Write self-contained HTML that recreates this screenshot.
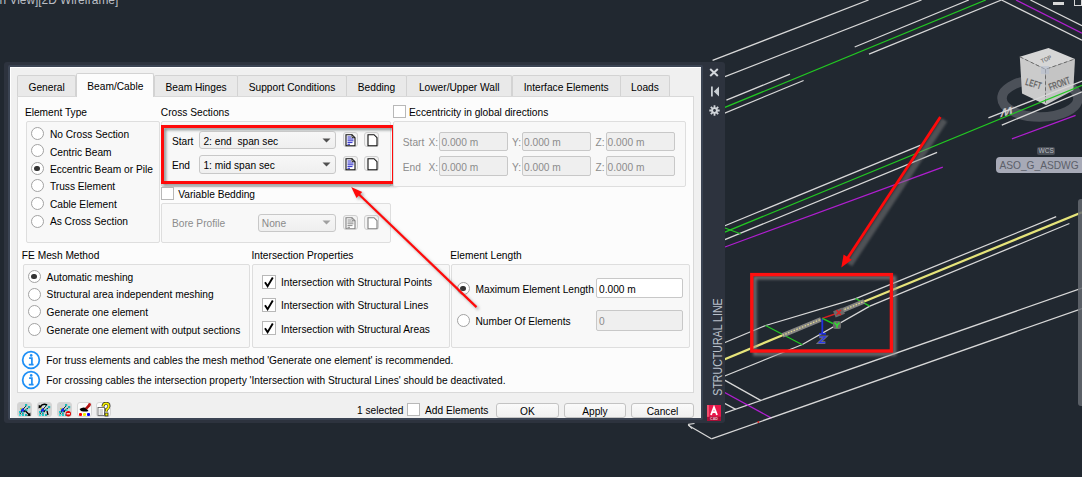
<!DOCTYPE html>
<html><head><meta charset="utf-8"><style>
html,body{margin:0;padding:0;}
body{width:1082px;height:477px;overflow:hidden;background:#212830;position:relative;font-family:"Liberation Sans", sans-serif;}
.t{position:absolute;font-family:"Liberation Sans", sans-serif;font-size:10.2px;line-height:12px;white-space:nowrap;}
.r{position:absolute;}
.cad{position:absolute;left:0;top:0;}
.rad{position:absolute;width:11px;height:11px;border:1px solid #a2a2a2;border-radius:50%;background:#fff;}
.rad .dot{position:absolute;left:2.6px;top:2.6px;width:5.8px;height:5.8px;border-radius:50%;background:#333;}
.chk{position:absolute;border:1px solid #b8b8b8;background:#fff;}
.tab{position:absolute;box-sizing:border-box;border:1px solid #d3d3d3;border-bottom:none;background:#e9e9e9;border-radius:2px 2px 0 0;}
.tab.sel{background:#fcfcfc;}
.combo{position:absolute;border:1px solid #c8c8c8;border-radius:3px;background:linear-gradient(#f7f7f7,#efefef);}
.ibtn{position:absolute;width:13px;height:13px;border:1px solid #cfcfcf;border-radius:3px;background:#f2f2f2;}
.inp{position:absolute;border:1px solid #c8c8c8;border-radius:2px;background:#fff;}
.inp.dis{background:#efefef;}
.btn{position:absolute;border:1px solid #c3c3c3;border-radius:3px;background:linear-gradient(#fafafa,#f0f0f0);}
</style></head><body>
<svg class="cad" width="1082" height="477" viewBox="0 0 1082 477">
<ellipse cx="1040" cy="98.2" rx="38" ry="18.8" fill="none" stroke="#4c5159" stroke-width="9.5"/>
<polygon points="1048.5,47.9 1075,58.9 1045.5,69.3 1019.8,56.8" fill="#d6d6d6"/>
<polygon points="1019.8,56.8 1045.5,69.3 1046,105 1022,93.5" fill="#cbcbcb"/>
<polygon points="1045.5,69.3 1075,58.9 1073.3,90.3 1046,105" fill="#c4c4c4"/>
<path d="M1019.8 56.8 L1045.5 69.3 L1075 58.9 M1045.5 69.3 V105" stroke="#6a6a6a" stroke-width="1" stroke-dasharray="3.5 2.5" fill="none"/>
<rect x="1041" y="66" width="8" height="8" fill="#b8c0d0" opacity="0.6"/>
<text font-family="Liberation Sans" font-size="8" font-weight="bold" fill="#686868" text-anchor="middle" transform="translate(1032.5 87) rotate(17) scale(0.8 1.25)">LEFT</text>
<text font-family="Liberation Sans" font-size="8" font-weight="bold" fill="#686868" text-anchor="middle" transform="translate(1060.5 87) rotate(-20) scale(0.8 1.3)">FRONT</text>
<text font-family="Liberation Sans" font-size="6" font-weight="bold" fill="#7a7a7a" text-anchor="middle" transform="translate(1047 61) rotate(-25) scale(0.9 1)">TOP</text>
<text font-family="Liberation Sans" font-size="11" font-weight="bold" fill="#c4c4c4" text-anchor="middle" transform="translate(1007.5 107.5) rotate(165) skewX(-25) scale(1.2 1)">W</text>
<line x1="712.6" y1="60.4" x2="868.6" y2="0" stroke="#d8d8d8" stroke-width="1.25"/>
<line x1="700" y1="86.3" x2="921.5" y2="0" stroke="#d8d8d8" stroke-width="1.25"/>
<line x1="726.4" y1="100.1" x2="790" y2="74.2" stroke="#d8d8d8" stroke-width="1.25"/>
<line x1="700" y1="117.6" x2="985.8" y2="0" stroke="#22c822" stroke-width="1.25"/>
<line x1="700" y1="123.3" x2="803.6" y2="80.5" stroke="#d8d8d8" stroke-width="1.25"/>
<line x1="854.7" y1="47" x2="968.8" y2="0" stroke="#d8d8d8" stroke-width="1.25"/>
<line x1="869" y1="54.1" x2="1001.5" y2="0" stroke="#d8d8d8" stroke-width="1.25"/>
<line x1="1001.5" y1="0" x2="1082" y2="40.3" stroke="#d8d8d8" stroke-width="1.25"/>
<line x1="1016" y1="0" x2="1082" y2="33.3" stroke="#b01ed0" stroke-width="1.25"/>
<line x1="1030.4" y1="0" x2="1082" y2="25.8" stroke="#d8d8d8" stroke-width="1.25"/>
<line x1="700" y1="236" x2="920.8" y2="145.1" stroke="#d8d8d8" stroke-width="1.25"/>
<line x1="700" y1="242.3" x2="1082" y2="85.3" stroke="#22c822" stroke-width="1.25"/>
<line x1="700" y1="249.8" x2="937.1" y2="152.4" stroke="#d8d8d8" stroke-width="1.25"/>
<line x1="725" y1="247" x2="942.8" y2="167.1" stroke="#b01ed0" stroke-width="1.25"/>
<line x1="725" y1="228" x2="741" y2="234" stroke="#22c822" stroke-width="1.25"/>
<line x1="988.4" y1="117.9" x2="1082" y2="81" stroke="#d8d8d8" stroke-width="1.25"/>
<line x1="1001.8" y1="125.1" x2="1082" y2="91.9" stroke="#d8d8d8" stroke-width="1.25"/>
<line x1="1011.9" y1="138.9" x2="1075.6" y2="115.4" stroke="#b01ed0" stroke-width="1.25"/>
<line x1="700" y1="353" x2="765.6" y2="325.5" stroke="#d8d8d8" stroke-width="1.25"/>
<line x1="765.6" y1="325.5" x2="855.7" y2="298.6" stroke="#d8d8d8" stroke-width="1.25"/>
<line x1="855.7" y1="298.6" x2="1056.2" y2="216.7" stroke="#d8d8d8" stroke-width="1.25"/>
<line x1="700" y1="369.4" x2="782.5" y2="335.3" stroke="#e6e47a" stroke-width="2.2"/>
<line x1="864.2" y1="301.4" x2="1082" y2="212.3" stroke="#e6e47a" stroke-width="2.2"/>
<line x1="700" y1="386" x2="802.4" y2="344.5" stroke="#d8d8d8" stroke-width="1.25"/>
<line x1="802.4" y1="344.5" x2="869.8" y2="306.1" stroke="#d8d8d8" stroke-width="1.25"/>
<line x1="869.8" y1="306.1" x2="1069.4" y2="223.5" stroke="#d8d8d8" stroke-width="1.25"/>
<line x1="765.6" y1="325.5" x2="802.4" y2="344.7" stroke="#22c822" stroke-width="1.25"/>
<line x1="855.7" y1="298.6" x2="869.8" y2="306.1" stroke="#22c822" stroke-width="1.25"/>
<line x1="700" y1="366.4" x2="725" y2="380.4" stroke="#d8d8d8" stroke-width="1.25"/>
<line x1="725" y1="380.4" x2="761.1" y2="400.6" stroke="#d8d8d8" stroke-width="1.25"/>
<line x1="700" y1="421.7" x2="1082" y2="288.1" stroke="#d8d8d8" stroke-width="1.25"/>
<line x1="700" y1="390" x2="735.7" y2="409.4" stroke="#d8d8d8" stroke-width="1.25"/>
<line x1="700" y1="379" x2="771.5" y2="418.1" stroke="#b01ed0" stroke-width="1.25"/>
<line x1="688.2" y1="425.2" x2="711.4" y2="438.8" stroke="#d8d8d8" stroke-width="1.25"/>
<line x1="711.4" y1="438.8" x2="1082" y2="308.5" stroke="#d8d8d8" stroke-width="1.25"/>
<line x1="688.2" y1="424.4" x2="694.5" y2="423.5" stroke="#d8d8d8" stroke-width="1.25"/>
<line x1="688.2" y1="424.4" x2="692" y2="428.6" stroke="#d8d8d8" stroke-width="1.25"/>
<line x1="782.5" y1="335.3" x2="821" y2="319.3" stroke="#858585" stroke-width="4.6"/>
<line x1="839" y1="311.8" x2="864.2" y2="301.4" stroke="#858585" stroke-width="4.6"/>
<line x1="782.5" y1="335.3" x2="821" y2="319.3" stroke="#e0d890" stroke-width="1.3" stroke-dasharray="1.5 1.5"/>
<line x1="839" y1="311.8" x2="864.2" y2="301.4" stroke="#e0d890" stroke-width="1.3" stroke-dasharray="1.5 1.5"/>
<line x1="822.3" y1="318.4" x2="822.3" y2="333.5" stroke="#2030e0" stroke-width="1.8"/>
<line x1="819" y1="333.8" x2="826" y2="333.8" stroke="#2030e0" stroke-width="1.6"/>
<path d="M819.3 336.8 H825.3 L819.3 342.6 H825.3" stroke="#777" stroke-width="2.8" fill="none"/>
<path d="M819.3 336.8 H825.3 L819.3 342.6 H825.3" stroke="#2838e8" stroke-width="1.3" fill="none"/>
<line x1="822.3" y1="318.4" x2="835" y2="314" stroke="#d82020" stroke-width="1.5"/>
<rect x="834" y="309" width="10" height="7" fill="#6a6a6a" transform="rotate(-22 839 312.5)"/>
<path d="M836.5 310 L841 315 M841 310 L836.5 315" stroke="#e02020" stroke-width="1.3"/>
<line x1="822.3" y1="318.4" x2="834" y2="324" stroke="#20c820" stroke-width="1.5"/>
<rect x="833" y="321" width="8" height="8" fill="#6a6a6a" rx="2"/>
<path d="M834.5 322.5 L837 325.5 L839.5 322.5 M837 325.5 V328" stroke="#30e030" stroke-width="1.4" fill="none"/>
<circle cx="758.3" cy="421.9" r="1" fill="#e02020"/>
</svg>
<div class="r" style="left:1037.2px;top:146.8px;width:18px;height:8.5px;background:#4a4f57;border-radius:2px"></div>
<div class="t" style="left:1037.2px;width:18px;text-align:center;top:146.3px;font-size:6.5px;line-height:9px;color:#b8bcc2">WCS</div>
<div class="r" style="left:996px;top:157.4px;width:96px;height:15.8px;background:#a7aab7;border-radius:4px"></div>
<div class="t" style="left:999.4px;top:158.6px;font-size:10.2px;line-height:14px;color:#5c606a">ASO_G_ASDWG</div>
<div class="r" style="left:1077.5px;top:199px;width:6px;height:207px;background:rgba(100,105,112,0.85);border-radius:3px"></div>
<div class="r" style="left:1053px;top:2px;width:11px;height:3px;background:#d8d8d8"></div>
<div class="r" style="left:1073.5px;top:-2px;width:6px;height:6px;border:1.5px solid #d8d8d8"></div>
<div class="t" style="left:-0.5px;top:-6.23px;color:#babec4;font-size:11.9px;">n View][2D Wireframe]</div>
<div class="r" style="left:4px;top:62px;width:721.3px;height:360.8px;background:#2d333e;border-radius:3px;"></div>
<div class="r" style="left:8px;top:65px;width:695px;height:355.4px;background:#3b4453;border-radius:2px;"></div>
<div class="r" style="left:10px;top:67px;width:691.4px;height:351px;background:#f0f0f0;border-top:1px solid #fff;border-left:1px solid #fff;box-sizing:border-box;"></div>
<svg class="r" style="left:709px;top:67.5px" width="10" height="9" viewBox="0 0 10 9"><path d="M1.2 1 L8.8 8 M8.8 1 L1.2 8" stroke="#d3d7dc" stroke-width="2"/></svg>
<svg class="r" style="left:709.5px;top:85.5px" width="10" height="11" viewBox="0 0 10 11"><rect x="1" y="0.5" width="1.8" height="10" fill="#c9ced4"/><path d="M9 0.5 V10.5 L3.8 5.5 Z" fill="#c9ced4"/></svg>
<svg class="r" style="left:708.5px;top:104.5px" width="11" height="11" viewBox="0 0 11 11"><g stroke="#d0d4d9" stroke-width="1.8"><path d="M5.5 0.3 V10.7 M0.3 5.5 H10.7 M1.8 1.8 L9.2 9.2 M9.2 1.8 L1.8 9.2"/></g><circle cx="5.5" cy="5.5" r="3.2" fill="#d0d4d9"/><circle cx="5.5" cy="5.5" r="1.4" fill="#2c323c"/></svg>
<div class="t" style="left:716.6px;top:346.6px;font-size:10.6px;line-height:12px;color:#b9c0ca;transform:translate(-50%,-50%) rotate(-90deg) scaleY(1.22);letter-spacing:0px">STRUCTURAL LINE</div>
<svg class="r" style="left:707px;top:404.8px" width="14" height="16" viewBox="0 0 14 16"><rect x="0" y="11.6" width="14" height="4.4" fill="#a80f36"/><rect x="0" y="0" width="14" height="11.8" fill="#e8174a"/><rect x="0" y="0" width="2" height="11.8" fill="#f0506f"/><path d="M4 10 L7 2.2 L10 10 M5.2 7.2 H8.8" stroke="#fff" stroke-width="1.8" fill="none"/><text x="7" y="15.3" font-family="Liberation Sans" font-size="3.6" font-weight="bold" fill="#f0c0cc" text-anchor="middle">CAD</text></svg>
<div class="r" style="left:17px;top:96px;width:675px;height:295px;background:#fcfcfc;border:1px solid #d9d9d9;"></div>
<div class="tab" style="left:16.900000000000002px;top:75px;width:59.5px;height:21px"></div>
<div class="t" style="left:17.3px;width:58.7px;text-align:center;top:82.1px">General</div>
<div class="tab" style="left:154.2px;top:75px;width:83.8px;height:21px"></div>
<div class="t" style="left:154.6px;width:83.0px;text-align:center;top:82.1px">Beam Hinges</div>
<div class="tab" style="left:237.2px;top:75px;width:109.7px;height:21px"></div>
<div class="t" style="left:237.6px;width:108.9px;text-align:center;top:82.1px">Support Conditions</div>
<div class="tab" style="left:346.1px;top:75px;width:60.699999999999974px;height:21px"></div>
<div class="t" style="left:346.5px;width:59.89999999999998px;text-align:center;top:82.1px">Bedding</div>
<div class="tab" style="left:406.0px;top:75px;width:106.40000000000002px;height:21px"></div>
<div class="t" style="left:406.4px;width:105.60000000000002px;text-align:center;top:82.1px">Lower/Upper Wall</div>
<div class="tab" style="left:511.6px;top:75px;width:109.19999999999997px;height:21px"></div>
<div class="t" style="left:512px;width:108.39999999999998px;text-align:center;top:82.1px">Interface Elements</div>
<div class="tab" style="left:620.0px;top:75px;width:50.00000000000004px;height:21px"></div>
<div class="t" style="left:620.4px;width:49.200000000000045px;text-align:center;top:82.1px">Loads</div>
<div class="tab sel" style="left:75.6px;top:73px;width:78.6px;height:24px"></div>
<div class="t" style="left:76px;width:78.6px;text-align:center;top:81.1px">Beam/Cable</div>
<div class="t" style="left:24.9px;top:106.70px;color:#000;font-size:10.2px;">Element Type</div>
<div class="r" style="left:26px;top:121px;width:132px;height:120px;background:#f8f8f8;border:1px solid #dedede;border-radius:2px;"></div>
<div class="rad" style="left:30.799999999999997px;top:126.9px"></div>
<div class="t" style="left:49.9px;top:129.10px;color:#000;font-size:10.2px;">No Cross Section</div>
<div class="rad" style="left:30.799999999999997px;top:144.42000000000002px"></div>
<div class="t" style="left:49.9px;top:146.55px;color:#000;font-size:10.2px;">Centric Beam</div>
<div class="rad" style="left:30.799999999999997px;top:161.94px"><div class="dot"></div></div>
<div class="t" style="left:49.9px;top:164.00px;color:#000;font-size:10.2px;">Eccentric Beam or Pile</div>
<div class="rad" style="left:30.799999999999997px;top:179.46px"></div>
<div class="t" style="left:49.9px;top:181.45px;color:#000;font-size:10.2px;">Truss Element</div>
<div class="rad" style="left:30.799999999999997px;top:196.98000000000002px"></div>
<div class="t" style="left:49.9px;top:198.90px;color:#000;font-size:10.2px;">Cable Element</div>
<div class="rad" style="left:30.799999999999997px;top:214.5px"></div>
<div class="t" style="left:49.9px;top:216.35px;color:#000;font-size:10.2px;">As Cross Section</div>
<div class="t" style="left:160.8px;top:106.70px;color:#000;font-size:10.2px;">Cross Sections</div>
<div class="r" style="left:161px;top:121px;width:228px;height:64px;background:#f8f8f8;border:1px solid #dedede;border-radius:2px;"></div>
<div class="r" style="left:161px;top:125px;width:227.5px;height:52.5px;border:3px solid #ff0a0a;filter:drop-shadow(2.5px 2.8px 1.5px rgba(90,100,100,0.75))"></div>
<div class="t" style="left:171.9px;top:135.50px;color:#000;font-size:10.2px;">Start</div>
<div class="t" style="left:171.9px;top:159.70px;color:#000;font-size:10.2px;">End</div>
<div class="combo" style="left:199.4px;top:130.9px;width:134.79999999999998px;height:16.5px;"></div>
<div class="t" style="left:203.4px;top:135.50px;color:#000;font-size:10.2px;">2: end&nbsp; span sec</div>
<svg class="r" style="left:321.7px;top:137.65px" width="9" height="5"><path d="M0.5 0.5 L8.5 0.5 L4.5 4.5 Z" fill="#505050"/></svg>
<div class="combo" style="left:199.4px;top:155.4px;width:134.79999999999998px;height:16.19999999999999px;"></div>
<div class="t" style="left:203.4px;top:160.00px;color:#000;font-size:10.2px;">1: mid span sec</div>
<svg class="r" style="left:321.7px;top:162.0px" width="9" height="5"><path d="M0.5 0.5 L8.5 0.5 L4.5 4.5 Z" fill="#505050"/></svg>
<div class="ibtn" style="left:342.5px;top:132.2px"></div>
<svg class="r" style="left:345.0px;top:134.0px" width="11" height="12.5" viewBox="0 0 11 12.5"><path d="M1 0.7 H7 L10 3.7 V11.8 H1 Z" fill="#fff" stroke="#111" stroke-width="1.1"/><path d="M7 0.7 V3.7 H10" fill="none" stroke="#111" stroke-width="0.9"/><path d="M2.5 3 H6 M2.5 5 H8.5 M2.5 6.8 H8.5 M2.5 8.6 H7.5 M2.5 10.3 H5" stroke="#2828c8" stroke-width="1"/></svg>
<div class="ibtn" style="left:364.4px;top:132.2px"></div>
<svg class="r" style="left:366.9px;top:134.0px" width="11" height="12.5" viewBox="0 0 11 12.5"><path d="M1 0.7 H7 L10 3.7 V11.8 H1 Z" fill="#fff" stroke="#111" stroke-width="1.1"/></svg>
<div class="ibtn" style="left:342.5px;top:156.4px"></div>
<svg class="r" style="left:345.0px;top:158.20000000000002px" width="11" height="12.5" viewBox="0 0 11 12.5"><path d="M1 0.7 H7 L10 3.7 V11.8 H1 Z" fill="#fff" stroke="#111" stroke-width="1.1"/><path d="M7 0.7 V3.7 H10" fill="none" stroke="#111" stroke-width="0.9"/><path d="M2.5 3 H6 M2.5 5 H8.5 M2.5 6.8 H8.5 M2.5 8.6 H7.5 M2.5 10.3 H5" stroke="#2828c8" stroke-width="1"/></svg>
<div class="ibtn" style="left:364.4px;top:156.4px"></div>
<svg class="r" style="left:366.9px;top:158.20000000000002px" width="11" height="12.5" viewBox="0 0 11 12.5"><path d="M1 0.7 H7 L10 3.7 V11.8 H1 Z" fill="#fff" stroke="#111" stroke-width="1.1"/></svg>
<div class="chk" style="left:161.3px;top:186.6px;width:11px;height:11px"></div>
<div class="t" style="left:178.2px;top:189.10px;color:#000;font-size:10.2px;">Variable Bedding</div>
<div class="r" style="left:161px;top:203px;width:228px;height:38px;background:#f8f8f8;border:1px solid #dedede;border-radius:2px;"></div>
<div class="t" style="left:172px;top:218.00px;color:#8c8c8c;font-size:10.2px;">Bore Profile</div>
<div class="combo" style="left:257.8px;top:213.7px;width:76.39999999999998px;height:15.900000000000006px;"></div>
<div class="t" style="left:261.8px;top:218.30px;color:#8a8a8a;font-size:10.2px;">None</div>
<svg class="r" style="left:321.7px;top:220.14999999999998px" width="9" height="5"><path d="M0.5 0.5 L8.5 0.5 L4.5 4.5 Z" fill="#a0a0a0"/></svg>
<div class="ibtn" style="left:342.5px;top:214.8px"></div>
<svg class="r" style="left:345.0px;top:216.60000000000002px" width="11" height="12.5" viewBox="0 0 11 12.5"><path d="M1 0.7 H7 L10 3.7 V11.8 H1 Z" fill="#fff" stroke="#808080" stroke-width="1.1"/><path d="M7 0.7 V3.7 H10" fill="none" stroke="#808080" stroke-width="0.9"/><path d="M2.5 3 H6 M2.5 5 H8.5 M2.5 6.8 H8.5 M2.5 8.6 H7.5 M2.5 10.3 H5" stroke="#8a8a8a" stroke-width="1"/></svg>
<div class="ibtn" style="left:364.4px;top:214.8px"></div>
<svg class="r" style="left:366.9px;top:216.60000000000002px" width="11" height="12.5" viewBox="0 0 11 12.5"><path d="M1 0.7 H7 L10 3.7 V11.8 H1 Z" fill="#fff" stroke="#808080" stroke-width="1.1"/></svg>
<div class="chk" style="left:392.7px;top:105.2px;width:11px;height:11px"></div>
<div class="t" style="left:409px;top:106.70px;color:#000;font-size:10.2px;">Eccentricity in global directions</div>
<div class="r" style="left:393px;top:121px;width:291px;height:64px;background:#f8f8f8;border:1px solid #dedede;border-radius:2px;"></div>
<div class="t" style="left:402.8px;top:137.00px;color:#8c8c8c;font-size:10.2px;">Start</div>
<div class="t" style="left:428.5px;top:137.00px;color:#8c8c8c;font-size:10.2px;">X:</div>
<div class="t" style="left:512px;top:137.00px;color:#8c8c8c;font-size:10.2px;">Y:</div>
<div class="t" style="left:595.6px;top:137.00px;color:#8c8c8c;font-size:10.2px;">Z:</div>
<div class="inp dis" style="left:439.4px;top:131.5px;width:66.80000000000001px;height:17.80000000000001px"></div>
<div class="t" style="left:441.4px;top:137.00px;color:#8c8c8c;font-size:10.2px;">0.000 m</div>
<div class="inp dis" style="left:522px;top:131.5px;width:67.29999999999995px;height:17.80000000000001px"></div>
<div class="t" style="left:524px;top:137.00px;color:#8c8c8c;font-size:10.2px;">0.000 m</div>
<div class="inp dis" style="left:605.6px;top:131.5px;width:67.39999999999998px;height:17.80000000000001px"></div>
<div class="t" style="left:607.6px;top:137.00px;color:#8c8c8c;font-size:10.2px;">0.000 m</div>
<div class="t" style="left:402.8px;top:161.70px;color:#8c8c8c;font-size:10.2px;">End</div>
<div class="t" style="left:428.5px;top:161.70px;color:#8c8c8c;font-size:10.2px;">X:</div>
<div class="t" style="left:512px;top:161.70px;color:#8c8c8c;font-size:10.2px;">Y:</div>
<div class="t" style="left:595.6px;top:161.70px;color:#8c8c8c;font-size:10.2px;">Z:</div>
<div class="inp dis" style="left:439.4px;top:156.2px;width:66.80000000000001px;height:17.80000000000001px"></div>
<div class="t" style="left:441.4px;top:161.70px;color:#8c8c8c;font-size:10.2px;">0.000 m</div>
<div class="inp dis" style="left:522px;top:156.2px;width:67.29999999999995px;height:17.80000000000001px"></div>
<div class="t" style="left:524px;top:161.70px;color:#8c8c8c;font-size:10.2px;">0.000 m</div>
<div class="inp dis" style="left:605.6px;top:156.2px;width:67.39999999999998px;height:17.80000000000001px"></div>
<div class="t" style="left:607.6px;top:161.70px;color:#8c8c8c;font-size:10.2px;">0.000 m</div>
<div class="t" style="left:21.8px;top:249.70px;color:#000;font-size:10.2px;">FE Mesh Method</div>
<div class="r" style="left:22.9px;top:264.4px;width:225.1px;height:81.60000000000002px;background:#f8f8f8;border:1px solid #dedede;border-radius:2px;"></div>
<div class="rad" style="left:27.9px;top:270.1px"><div class="dot"></div></div>
<div class="t" style="left:46.6px;top:271.90px;color:#000;font-size:10.2px;">Automatic meshing</div>
<div class="rad" style="left:27.9px;top:287.65000000000003px"></div>
<div class="t" style="left:46.6px;top:289.45px;color:#000;font-size:10.2px;">Structural area independent meshing</div>
<div class="rad" style="left:27.9px;top:305.20000000000005px"></div>
<div class="t" style="left:46.6px;top:307.00px;color:#000;font-size:10.2px;">Generate one element</div>
<div class="rad" style="left:27.9px;top:322.75px"></div>
<div class="t" style="left:46.6px;top:324.55px;color:#000;font-size:10.2px;">Generate one element with output sections</div>
<div class="t" style="left:251.5px;top:249.70px;color:#000;font-size:10.2px;">Intersection Properties</div>
<div class="r" style="left:252.2px;top:264.4px;width:195.8px;height:81.60000000000002px;background:#f8f8f8;border:1px solid #dedede;border-radius:2px;"></div>
<div class="chk" style="left:262.3px;top:275.1px;width:11.5px;height:11.5px"><svg width="12" height="12" viewBox="0 0 12 12" style="position:absolute;left:0;top:0"><path d="M2 6.2 L4.6 10.2 L9.8 1.6" stroke="#000" stroke-width="1.9" fill="none" stroke-linejoin="miter"/></svg></div>
<div class="t" style="left:281px;top:277.30px;color:#000;font-size:10.2px;">Intersection with Structural Points</div>
<div class="chk" style="left:262.3px;top:298.20000000000005px;width:11.5px;height:11.5px"><svg width="12" height="12" viewBox="0 0 12 12" style="position:absolute;left:0;top:0"><path d="M2 6.2 L4.6 10.2 L9.8 1.6" stroke="#000" stroke-width="1.9" fill="none" stroke-linejoin="miter"/></svg></div>
<div class="t" style="left:281px;top:300.40px;color:#000;font-size:10.2px;">Intersection with Structural Lines</div>
<div class="chk" style="left:262.3px;top:321.3px;width:11.5px;height:11.5px"><svg width="12" height="12" viewBox="0 0 12 12" style="position:absolute;left:0;top:0"><path d="M2 6.2 L4.6 10.2 L9.8 1.6" stroke="#000" stroke-width="1.9" fill="none" stroke-linejoin="miter"/></svg></div>
<div class="t" style="left:281px;top:323.50px;color:#000;font-size:10.2px;">Intersection with Structural Areas</div>
<div class="t" style="left:450.3px;top:249.70px;color:#000;font-size:10.2px;">Element Length</div>
<div class="r" style="left:451px;top:264px;width:237px;height:82px;background:#f8f8f8;border:1px solid #dedede;border-radius:2px;"></div>
<div class="rad" style="left:456.5px;top:282.0px"><div class="dot"></div></div>
<div class="t" style="left:475.5px;top:284.00px;color:#000;font-size:10.2px;">Maximum Element Length</div>
<div class="inp" style="left:596.4px;top:278px;width:85px;height:18.4px"></div>
<div class="t" style="left:599px;top:284.00px;color:#000;font-size:10.2px;">0.000 m</div>
<div class="rad" style="left:456.5px;top:314.0px"></div>
<div class="t" style="left:475.5px;top:316.00px;color:#000;font-size:10.2px;">Number Of Elements</div>
<div class="inp dis" style="left:596.4px;top:310.2px;width:85px;height:18.4px"></div>
<div class="t" style="left:599px;top:316.00px;color:#8c8c8c;font-size:10.2px;">0</div>
<svg class="r" style="left:21.1px;top:349.7px" width="20" height="20" viewBox="0 0 20 20"><circle cx="10" cy="10" r="8.35" fill="#fff" stroke="#1e8ff5" stroke-width="1.75"/><circle cx="10.2" cy="5.4" r="1.3" fill="#1e8ff5"/><path d="M8.1 8.2 H10.9 V14.6 M7.8 14.6 H12.6" stroke="#1e8ff5" stroke-width="1.7" fill="none"/></svg>
<div class="t" style="left:46.3px;top:355.00px;color:#000;font-size:10.2px;">For truss elements and cables the mesh method 'Generate one element' is recommended.</div>
<svg class="r" style="left:21.1px;top:369.8px" width="20" height="20" viewBox="0 0 20 20"><circle cx="10" cy="10" r="8.35" fill="#fff" stroke="#1e8ff5" stroke-width="1.75"/><circle cx="10.2" cy="5.4" r="1.3" fill="#1e8ff5"/><path d="M8.1 8.2 H10.9 V14.6 M7.8 14.6 H12.6" stroke="#1e8ff5" stroke-width="1.7" fill="none"/></svg>
<div class="t" style="left:46.3px;top:375.10px;color:#000;font-size:10.2px;">For crossing cables the intersection property 'Intersection with Structural Lines' should be deactivated.</div>
<div class="ibtn" style="left:17.3px;top:402.3px;width:13px;height:13px;border-color:#d6d6d6;background:#d4d4d4"></div>
<div class="ibtn" style="left:37px;top:402.3px;width:13px;height:13px;border-color:#d6d6d6;background:#d4d4d4"></div>
<div class="ibtn" style="left:56.6px;top:402.3px;width:13px;height:13px;border-color:#d6d6d6;background:#d4d4d4"></div>
<div class="ibtn" style="left:76.5px;top:402.3px;width:13px;height:13px;border-color:#d6d6d6;background:#fafafa"></div>
<div class="ibtn" style="left:96.3px;top:402.3px;width:13px;height:13px;border-color:#d6d6d6;background:#fafafa"></div>
<svg class="r" style="left:17.3px;top:402.3px" width="15" height="15" viewBox="0 0 15 15"><g><path d="M2.5 13 L5 8 L9 4 M5 13 L7 9 L11 6" stroke="#103030" stroke-width="1"/><rect x="2" y="9" width="2" height="2" fill="#20c8c8"/><rect x="2" y="12" width="2" height="2" fill="#40e0e0"/><rect x="5" y="12" width="2" height="2" fill="#20c8c8"/><rect x="8" y="12" width="2" height="2" fill="#20b0b0"/><rect x="5" y="10" width="2" height="1.5" fill="#30d0d0"/><circle cx="5.5" cy="8" r="1.8" fill="#1828e8"/><rect x="3" y="6" width="1.5" height="1.5" fill="#d0e020"/><rect x="8" y="2" width="2.2" height="2.2" fill="#20b8b8"/><rect x="11" y="4" width="2.2" height="2.2" fill="#20b8b8"/><rect x="8.5" y="7" width="2" height="2" fill="#30d0d0"/></g><path d="M8.5 9 L12.5 13" stroke="#000" stroke-width="1.5"/><path d="M13.5 14 L10 13.8 L13.3 10.5 Z" fill="#000"/></svg>
<svg class="r" style="left:37px;top:402.3px" width="15" height="15" viewBox="0 0 15 15"><g><path d="M2.5 13 L5 8 L9 4 M5 13 L7 9 L11 6" stroke="#103030" stroke-width="1"/><rect x="2" y="9" width="2" height="2" fill="#20c8c8"/><rect x="2" y="12" width="2" height="2" fill="#40e0e0"/><rect x="5" y="12" width="2" height="2" fill="#20c8c8"/><rect x="8" y="12" width="2" height="2" fill="#20b0b0"/><rect x="5" y="10" width="2" height="1.5" fill="#30d0d0"/><circle cx="5.5" cy="8" r="1.8" fill="#1828e8"/><rect x="3" y="6" width="1.5" height="1.5" fill="#d0e020"/><rect x="8" y="2" width="2.2" height="2.2" fill="#20b8b8"/><rect x="11" y="4" width="2.2" height="2.2" fill="#20b8b8"/><rect x="8.5" y="7" width="2" height="2" fill="#30d0d0"/></g><path d="M3 5 Q6 0.8 10 3" stroke="#000" stroke-width="1.5" fill="none"/><path d="M1.5 6.5 L1.8 2.8 L5 5 Z" fill="#000"/><path d="M10 9 L11 13" stroke="#000" stroke-width="1.3"/></svg>
<svg class="r" style="left:56.6px;top:402.3px" width="15" height="15" viewBox="0 0 15 15"><g><path d="M2.5 13 L5 8 L9 4 M5 13 L7 9 L11 6" stroke="#103030" stroke-width="1"/><rect x="2" y="9" width="2" height="2" fill="#20c8c8"/><rect x="2" y="12" width="2" height="2" fill="#40e0e0"/><rect x="5" y="12" width="2" height="2" fill="#20c8c8"/><rect x="8" y="12" width="2" height="2" fill="#20b0b0"/><rect x="5" y="10" width="2" height="1.5" fill="#30d0d0"/><circle cx="5.5" cy="8" r="1.8" fill="#1828e8"/><rect x="3" y="6" width="1.5" height="1.5" fill="#d0e020"/><rect x="8" y="2" width="2.2" height="2.2" fill="#20b8b8"/><rect x="11" y="4" width="2.2" height="2.2" fill="#20b8b8"/><rect x="8.5" y="7" width="2" height="2" fill="#30d0d0"/></g><circle cx="11.3" cy="11.8" r="2.7" fill="#e00000"/><rect x="9.6" y="11.2" width="3.4" height="1.2" fill="#fff"/></svg>
<svg class="r" style="left:76.5px;top:402.3px" width="15" height="15" viewBox="0 0 15 15"><path d="M2.5 7 Q6 4.5 9 6 L11.5 9 Q8 10 4 9 Z" fill="#000"/><path d="M8 6 L11.5 2 L13.5 4 L10 7.5 Z" fill="#b01010"/><circle cx="12.5" cy="2.5" r="1.5" fill="#c01818"/><rect x="2" y="11" width="3" height="3" fill="#f00" rx="1"/><rect x="6" y="11" width="3" height="3" fill="#ee0" rx="1"/><rect x="10" y="11" width="3" height="3" fill="#00f" rx="1"/></svg>
<svg class="r" style="left:96.3px;top:402.3px" width="15" height="15" viewBox="0 0 15 15"><rect x="2" y="5.5" width="6.5" height="8" fill="#fff" stroke="#555" stroke-width="0.8"/><path d="M3.5 8 H7 M3.5 10 H7 M3.5 12 H7" stroke="#999" stroke-width="0.8"/><path d="M7 4.5 Q7.3 1.3 10 1.3 Q13.2 1.3 12.8 4.5 Q12.4 6.5 10.5 7.5 V9.5" stroke="#222" stroke-width="3" fill="none"/><path d="M7 4.5 Q7.3 1.3 10 1.3 Q13.2 1.3 12.8 4.5 Q12.4 6.5 10.5 7.5 V9.5" stroke="#f5f000" stroke-width="1.7" fill="none"/><rect x="9" y="11" width="3" height="3" fill="#f5f000" stroke="#222" stroke-width="0.8"/></svg>
<div class="t" style="left:357px;top:405.40px;color:#000;font-size:10.2px;">1 selected</div>
<div class="chk" style="left:407.3px;top:403.1px;width:11px;height:11px"></div>
<div class="t" style="left:425px;top:405.40px;color:#000;font-size:10.2px;">Add Elements</div>
<div class="btn" style="left:496.2px;top:402.5px;width:60.400000000000034px;height:13px"></div>
<div class="t" style="left:496.2px;width:62.400000000000034px;text-align:center;top:405.7px">OK</div>
<div class="btn" style="left:563.6px;top:402.5px;width:60.69999999999993px;height:13px"></div>
<div class="t" style="left:563.6px;width:62.69999999999993px;text-align:center;top:405.7px">Apply</div>
<div class="btn" style="left:631.3px;top:402.5px;width:60.40000000000009px;height:13px"></div>
<div class="t" style="left:631.3px;width:62.40000000000009px;text-align:center;top:405.7px">Cancel</div>
<svg class="cad" width="1082" height="477" viewBox="0 0 1082 477" style="z-index:5;filter:drop-shadow(2px 2px 1.5px rgba(120,120,120,0.6))"><line x1="476.5" y1="307.1" x2="357" y2="192.5" stroke="#ff0a0a" stroke-width="2.2"/><path d="M351.2 186.9 L356.5 198 L362.2 192 Z" fill="#ff0a0a"/></svg>
<svg class="cad" width="1082" height="477" viewBox="0 0 1082 477" style="z-index:6"><defs><filter id="bl" x="-20%" y="-20%" width="140%" height="140%"><feGaussianBlur stdDeviation="0.9"/></filter></defs><path d="M944.5 120 L849.5 264.5" stroke="rgba(125,125,125,0.5)" stroke-width="6.5" filter="url(#bl)"/><line x1="940.4" y1="117" x2="846.5" y2="259.8" stroke="#ff0a0a" stroke-width="2.8"/><path d="M841.3 267.5 L843.6 254.6 L851.8 259.8 Z" fill="#ff0a0a"/></svg>
<svg class="cad" width="1082" height="477" viewBox="0 0 1082 477" style="z-index:6;filter:drop-shadow(3px 3px 1.8px rgba(140,140,140,0.75))"><rect x="751.8" y="274.6" width="139.6" height="76.4" fill="none" stroke="#ff1010" stroke-width="3.4"/></svg>
</body></html>
